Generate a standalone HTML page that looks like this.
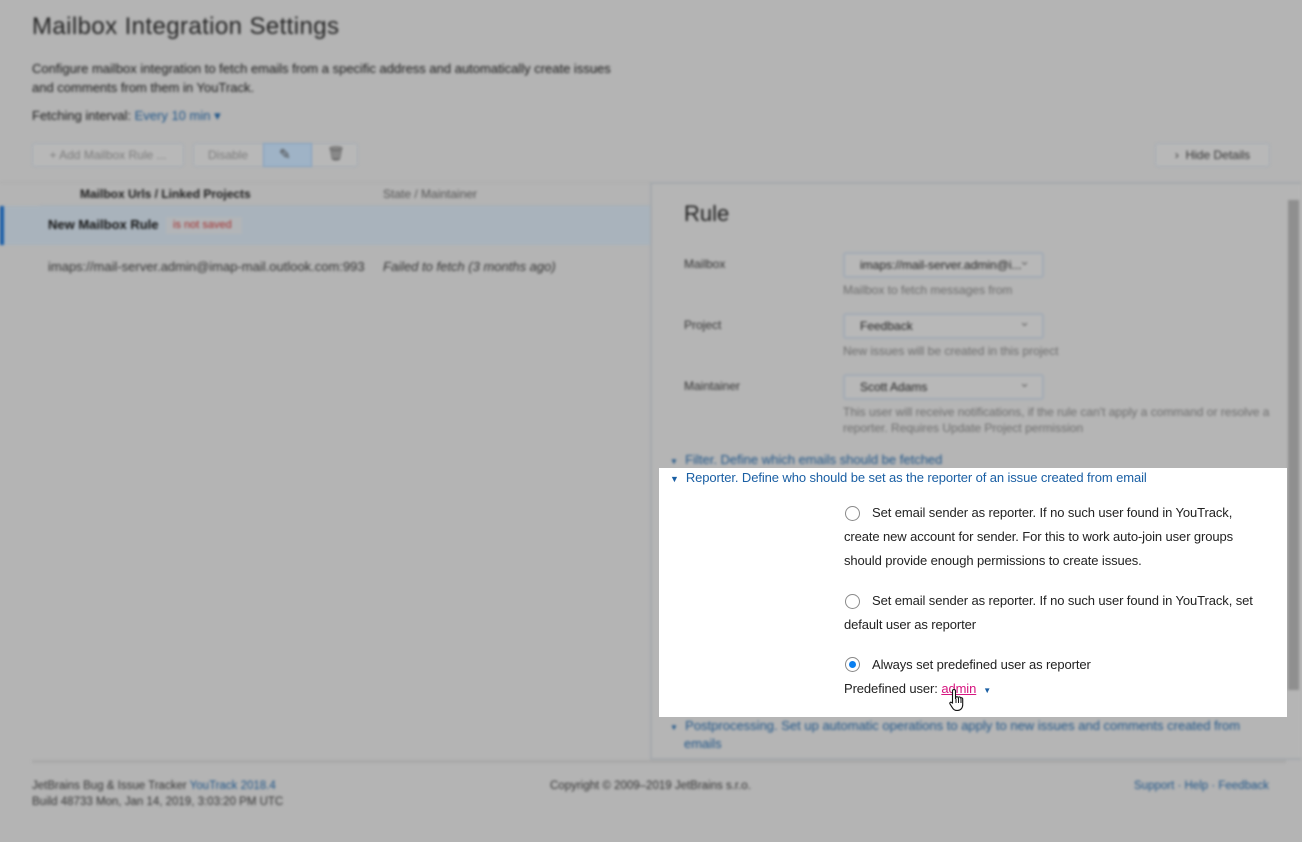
<!DOCTYPE html>
<html><head><meta charset="utf-8">
<style>
*{box-sizing:border-box;margin:0;padding:0}
body{width:1302px;height:842px;background:#b4b4b4;font-family:"Liberation Sans",sans-serif;position:relative;overflow:hidden;color:#1a1a1a}
.bg{position:absolute;inset:0;filter:blur(1.2px)}
.a{position:absolute;white-space:nowrap}
.s{font-size:13px}
.lnk{color:#1f5588}
.btn{position:absolute;top:143px;height:24px;border:1px solid #a4acb4;border-radius:3px;background:#b8b8b8;font-size:12px;color:#7b7b7b;line-height:22px;text-align:center}
.sel{position:absolute;left:843px;width:201px;height:26px;border:2px solid #a2abb5;border-radius:3px;background:#b8b8b8;font-size:12px;line-height:22px;padding-left:15px;color:#222}
.sel:after{content:"⌄";position:absolute;right:12px;top:-4px;color:#666;font-size:13px}
.hint{font-size:12px;color:#6c6c6c}
.lab{font-size:12px;color:#333}
.w{position:absolute;left:659px;top:468px;width:628px;height:249px;background:#fff;font-size:13px;color:#222}
.r{position:absolute;width:15px;height:15px;border:1px solid #8a8a8a;border-radius:50%;background:#fff}
.w .t{position:absolute;white-space:nowrap;letter-spacing:-0.1px}
</style></head><body>
<div class="bg">
<div class="a" style="left:32px;top:13px;font-size:24px;color:#222;letter-spacing:0.4px">Mailbox Integration Settings</div>
<div class="a s" style="left:32px;top:61px">Configure mailbox integration to fetch emails from a specific address and automatically create issues</div>
<div class="a s" style="left:32px;top:80px">and comments from them in YouTrack.</div>
<div class="a s" style="left:32px;top:108px">Fetching interval: <span class="lnk">Every 10 min ▾</span></div>
<div class="btn" style="left:32px;width:152px;">+ Add Mailbox Rule ...</div>
<div class="btn" style="left:193px;width:165px;"></div>
<div class="a" style="left:208px;top:148px;color:#7b7b7b;font-size:12px">Disable</div>
<div class="a" style="left:263px;top:143px;width:49px;height:24px;background:#9fb3c6;border:1px solid #7e9ebf"></div>
<div class="a" style="left:279px;top:146px;font-size:14px;color:#444">✎</div>
<div class="a" style="left:327px;top:145px;font-size:14px;color:#555">🗑</div>
<div class="btn" style="left:1155px;width:115px;color:#333">›&nbsp;&nbsp;Hide Details</div>
<div class="a" style="left:0;top:182px;width:650px;height:1px;background:#aaa"></div>
<div class="a" style="left:80px;top:187px;font-weight:bold;font-size:12px">Mailbox Urls / Linked Projects</div>
<div class="a" style="left:383px;top:187px;color:#555;font-size:12px">State / Maintainer</div>
<div class="a" style="left:40px;top:205px;width:610px;height:1px;background:#a8aeb3"></div>
<div class="a" style="left:0;top:206px;width:650px;height:39px;background:#a9b3bc"></div>
<div class="a" style="left:0;top:206px;width:4px;height:39px;background:#1a5ea8"></div>
<div class="a" style="left:48px;top:217px;font-weight:bold;color:#111;font-size:13px">New Mailbox Rule</div>
<div class="a" style="left:166px;top:217px;width:76px;height:17px;background:#b2b5b8;font-size:11px;color:#a43030;padding-left:7px;line-height:17px">is not saved</div>
<div class="a s" style="left:48px;top:259px;color:#333">imaps://mail-server.admin@imap-mail.outlook.com:993</div>
<div class="a s" style="left:383px;top:259px;font-style:italic;color:#333">Failed to fetch (3 months ago)</div>
<div class="a" style="left:650px;top:182px;width:651px;height:578px;border:2px solid #a4a8ac;border-right:none;background:#b5b5b5"></div>
<div class="a" style="left:1288px;top:200px;width:11px;height:490px;background:#8f8f8f"></div>
<div class="a" style="left:684px;top:201px;font-size:22px;color:#1e1e1e">Rule</div>
<div class="a lab" style="left:684px;top:257px">Mailbox</div>
<div class="a lab" style="left:684px;top:318px">Project</div>
<div class="a lab" style="left:684px;top:379px">Maintainer</div>
<div class="sel" style="top:252px">imaps://mail-server.admin@i...</div>
<div class="sel" style="top:313px">Feedback</div>
<div class="sel" style="top:374px">Scott Adams</div>
<div class="a hint" style="left:843px;top:283px">Mailbox to fetch messages from</div>
<div class="a hint" style="left:843px;top:344px">New issues will be created in this project</div>
<div class="a hint" style="left:843px;top:405px">This user will receive notifications, if the rule can't apply a command or resolve a</div>
<div class="a hint" style="left:843px;top:421px">reporter. Requires Update Project permission</div>
<div class="a s lnk" style="left:670px;top:452px"><span style="font-size:8px">▼</span>&nbsp;&nbsp;Filter. Define which emails should be fetched</div>
<div class="a s lnk" style="left:670px;top:718px"><span style="font-size:8px">▼</span>&nbsp;&nbsp;Postprocessing. Set up automatic operations to apply to new issues and comments created from</div>
<div class="a s lnk" style="left:684px;top:736px">emails</div>
<div class="a" style="left:32px;top:760px;width:1254px;height:3px;background:#a9a9a9"></div>
<div class="a" style="left:32px;top:780px;font-size:11.5px;color:#333">JetBrains Bug &amp; Issue Tracker <span class="lnk">YouTrack 2018.4</span></div>
<div class="a" style="left:32px;top:796px;font-size:11.5px;color:#333">Build 48733 Mon, Jan 14, 2019, 3:03:20 PM UTC</div>
<div class="a" style="left:550px;top:780px;font-size:11.5px;color:#333">Copyright © 2009–2019 JetBrains s.r.o.</div>
<div class="a lnk" style="left:1134px;top:780px;font-size:11.5px">Support · Help · Feedback</div>
</div>
<div class="w">
<div class="t" style="left:11px;top:2px;color:#1a5fa4;font-size:13px"><span style="font-size:9px">▼</span>&nbsp; Reporter. Define who should be set as the reporter of an issue created from email</div>
<div class="r" style="left:186px;top:38px"></div>
<div class="t" style="left:213px;top:37px">Set email sender as reporter. If no such user found in YouTrack,</div>
<div class="t" style="left:185px;top:61px">create new account for sender. For this to work auto-join user groups</div>
<div class="t" style="left:185px;top:85px">should provide enough permissions to create issues.</div>
<div class="r" style="left:186px;top:126px"></div>
<div class="t" style="left:213px;top:125px">Set email sender as reporter. If no such user found in YouTrack, set</div>
<div class="t" style="left:185px;top:149px">default user as reporter</div>
<div class="r" style="left:186px;top:189px;border-color:#888"><div style="position:absolute;left:3px;top:3px;width:7px;height:7px;border-radius:50%;background:#0a7ff0"></div></div>
<div class="t" style="left:213px;top:189px">Always set predefined user as reporter</div>
<div class="t" style="left:185px;top:213px">Predefined user: <span style="color:#d6157f;text-decoration:underline">admin</span> &nbsp;<span style="color:#1a5fa4;font-size:8px">▼</span></div>
<svg style="position:absolute;left:290px;top:220px" width="18" height="24" viewBox="0 0 18 24"><path d="M5 1.5c1 0 1.5.6 1.5 1.5v8l.5-2c.8-.6 2-.3 2.2.6l.3-.4c.8-.5 2-.2 2.2.7.8-.4 2 0 2 1v6c0 3-2 5.5-5 5.5H7.5c-2 0-3-1-4-2.5L1 16c-.6-1 .3-2.2 1.4-1.6L3.5 15V3c0-.9.6-1.5 1.5-1.5z" fill="#fff" stroke="#111" stroke-width="1.1"/><path d="M7 11v4M9.5 10v5M12 10.5v4.5" stroke="#111" stroke-width="1"/></svg>
</div>
</body></html>
